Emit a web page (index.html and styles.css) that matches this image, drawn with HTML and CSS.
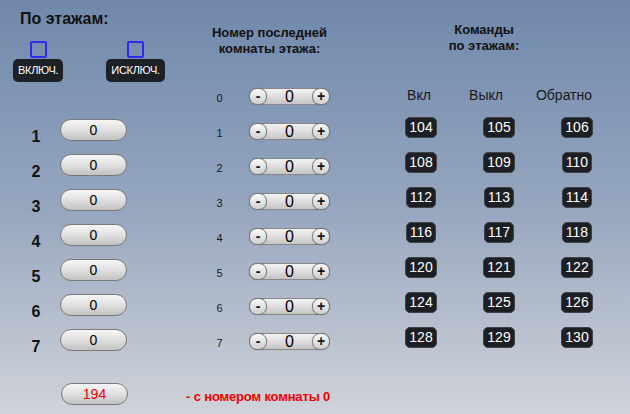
FILE: index.html
```html
<!DOCTYPE html>
<html lang="ru">
<head>
<meta charset="utf-8">
<title>По этажам</title>
<link rel="stylesheet" href="styles.css">
</head>
<body>
<div class="page">
  <div class="main">
    <section class="col-left">
      <h1 class="title">По этажам:</h1>
      <div class="toggles">
        <div class="toggle">
          <span class="check"></span>
          <span class="tbtn">ВКЛЮЧ.</span>
        </div>
        <div class="toggle">
          <span class="check"></span>
          <span class="tbtn">ИСКЛЮЧ.</span>
        </div>
      </div>
      <div class="lrows">
        <div class="lrow"><span class="num">1</span><span class="pill">0</span></div>
        <div class="lrow"><span class="num">2</span><span class="pill">0</span></div>
        <div class="lrow"><span class="num">3</span><span class="pill">0</span></div>
        <div class="lrow"><span class="num">4</span><span class="pill">0</span></div>
        <div class="lrow"><span class="num">5</span><span class="pill">0</span></div>
        <div class="lrow"><span class="num">6</span><span class="pill">0</span></div>
        <div class="lrow"><span class="num">7</span><span class="pill">0</span></div>
      </div>
    </section>

    <section class="col-mid">
      <h2 class="mtitle">Номер последней<br>комнаты этажа:</h2>
      <div class="mrows">
        <div class="mrow"><span class="mlabel">0</span><div class="stepper"><span class="sbtn">-</span><span class="sval">0</span><span class="sbtn">+</span></div></div>
        <div class="mrow"><span class="mlabel">1</span><div class="stepper"><span class="sbtn">-</span><span class="sval">0</span><span class="sbtn">+</span></div></div>
        <div class="mrow"><span class="mlabel">2</span><div class="stepper"><span class="sbtn">-</span><span class="sval">0</span><span class="sbtn">+</span></div></div>
        <div class="mrow"><span class="mlabel">3</span><div class="stepper"><span class="sbtn">-</span><span class="sval">0</span><span class="sbtn">+</span></div></div>
        <div class="mrow"><span class="mlabel">4</span><div class="stepper"><span class="sbtn">-</span><span class="sval">0</span><span class="sbtn">+</span></div></div>
        <div class="mrow"><span class="mlabel">5</span><div class="stepper"><span class="sbtn">-</span><span class="sval">0</span><span class="sbtn">+</span></div></div>
        <div class="mrow"><span class="mlabel">6</span><div class="stepper"><span class="sbtn">-</span><span class="sval">0</span><span class="sbtn">+</span></div></div>
        <div class="mrow"><span class="mlabel">7</span><div class="stepper"><span class="sbtn">-</span><span class="sval">0</span><span class="sbtn">+</span></div></div>
      </div>
    </section>

    <section class="col-right">
      <h2 class="rtitle">Команды<br>по этажам:</h2>
      <div class="rheads">
        <span>Вкл</span><span>Выкл</span><span>Обратно</span>
      </div>
      <div class="badges">
        <span class="badge">104</span><span class="badge">105</span><span class="badge">106</span>
        <span class="badge">108</span><span class="badge">109</span><span class="badge">110</span>
        <span class="badge">112</span><span class="badge">113</span><span class="badge">114</span>
        <span class="badge">116</span><span class="badge">117</span><span class="badge">118</span>
        <span class="badge">120</span><span class="badge">121</span><span class="badge">122</span>
        <span class="badge">124</span><span class="badge">125</span><span class="badge">126</span>
        <span class="badge">128</span><span class="badge">129</span><span class="badge">130</span>
      </div>
    </section>
  </div>

  <div class="foot">
    <span class="pill pill-red">194</span>
    <span class="note">- с номером комнаты 0</span>
  </div>
</div>
</body>
</html>
```

FILE: styles.css
```css
html, body {
  margin: 0;
  padding: 0;
}

.page {
  width: 630px;
  height: 414px;
  overflow: hidden;
  background: linear-gradient(to bottom, #6f88ab 0%, #96a6bf 50%, #d0d3da 100%);
  font-family: "Liberation Sans", Arial, sans-serif;
  color: #111;
}

.main {
  display: flex;
  height: 364px;
}

/* ---------- left column ---------- */
.col-left {
  width: 190px;
}

.title {
  margin: 0;
  padding: 9px 0 0 20px;
  font-size: 16px;
  line-height: 19px;
  font-weight: bold;
  color: #111;
}

.toggles {
  display: flex;
  gap: 43px;
  padding-left: 13px;
  margin-top: 13px;
}

.toggle {
  display: flex;
  flex-direction: column;
  align-items: center;
}

.check {
  display: block;
  width: 17px;
  height: 17px;
  box-sizing: border-box;
  border: 2px solid #2b2cf2;
  border-radius: 2px;
}

.tbtn {
  display: block;
  height: 23px;
  line-height: 23px;
  padding: 0 5px;
  margin-top: 1px;
  background: #1d2024;
  border-radius: 5px;
  color: #fff;
  font-size: 11px;
  letter-spacing: -0.3px;
}

.lrows {
  margin-top: 37px;
}

.lrow {
  display: flex;
  align-items: flex-start;
  height: 35px;
}

.num {
  width: 24px;
  margin-left: 24px;
  margin-top: 8px;
  text-align: center;
  font-size: 16px;
  line-height: 19px;
  font-weight: bold;
}

.pill {
  display: block;
  width: 67px;
  height: 22px;
  margin-left: 12px;
  box-sizing: border-box;
  border: 1px solid #7a7a7a;
  border-radius: 11px;
  background: linear-gradient(to bottom, #f6f6f6 0%, #e0e0e0 50%, #c2c2c2 100%);
  text-align: center;
  font-size: 14px;
  line-height: 20px;
  color: #000;
}

/* ---------- middle column ---------- */
.col-mid {
  width: 180px;
}

.mtitle {
  margin: 0;
  padding: 25px 21px 0 0;
  text-align: center;
  font-size: 13px;
  line-height: 16px;
  font-weight: bold;
  color: #111;
}

.mrows {
  margin-top: 22px;
}

.mrow {
  display: flex;
  align-items: center;
  height: 35px;
}

.mlabel {
  width: 19px;
  padding-left: 20px;
  margin-top: 3px;
  text-align: center;
  font-size: 11px;
  color: #1a1a1a;
}

.stepper {
  display: flex;
  align-items: center;
  width: 81px;
  height: 17px;
  margin-left: 20px;
  box-sizing: border-box;
  border: 1px solid #888;
  border-radius: 8px;
  background: linear-gradient(to bottom, #f2f2f2 0%, #dedede 50%, #c4c4c4 100%);
}

.sbtn {
  display: block;
  width: 18px;
  height: 17px;
  margin: -1px;
  box-sizing: border-box;
  border: 1px solid #7a7a7a;
  border-radius: 8px;
  background: linear-gradient(to bottom, #fbfbfb 0%, #e4e4e4 50%, #cfcfcf 100%);
  box-shadow: 0 0 1px rgba(0,0,0,0.3);
  text-align: center;
  font-size: 14px;
  font-weight: bold;
  line-height: 14px;
  color: #111;
}

.sval {
  flex: 1;
  text-align: center;
  font-size: 16px;
  line-height: 15px;
  color: #000;
}

/* ---------- right column ---------- */
.col-right {
  width: 260px;
}

.rtitle {
  margin: 0;
  padding: 22px 32px 0 0;
  text-align: center;
  font-size: 13px;
  line-height: 16px;
  font-weight: bold;
  color: #111;
}

.rheads {
  display: grid;
  grid-template-columns: 78px 56px 100px;
  padding-left: 10px;
  margin-top: 33px;
  font-size: 14px;
  line-height: 17px;
  color: #1a1a1a;
  text-align: center;
}

.badges {
  display: grid;
  grid-template-columns: repeat(3, 78px);
  grid-auto-rows: 35px;
  align-items: center;
  justify-items: center;
  padding-left: 12px;
  margin-top: 6px;
}

.badge {
  display: block;
  height: 21px;
  box-sizing: border-box;
  padding: 0 3px;
  border: 1px solid #3f4247;
  border-radius: 5px;
  background: #1c1f23;
  color: #fff;
  font-size: 14px;
  line-height: 19px;
}

/* ---------- footer ---------- */
.foot {
  display: flex;
  align-items: flex-start;
  margin-top: 19px;
  padding-left: 49px;
}

.pill-red {
  color: #e8000b;
}

.note {
  margin-left: 58px;
  margin-top: 6px;
  font-size: 13px;
  letter-spacing: -0.15px;
  line-height: 15px;
  font-weight: bold;
  color: #f20000;
}
```
